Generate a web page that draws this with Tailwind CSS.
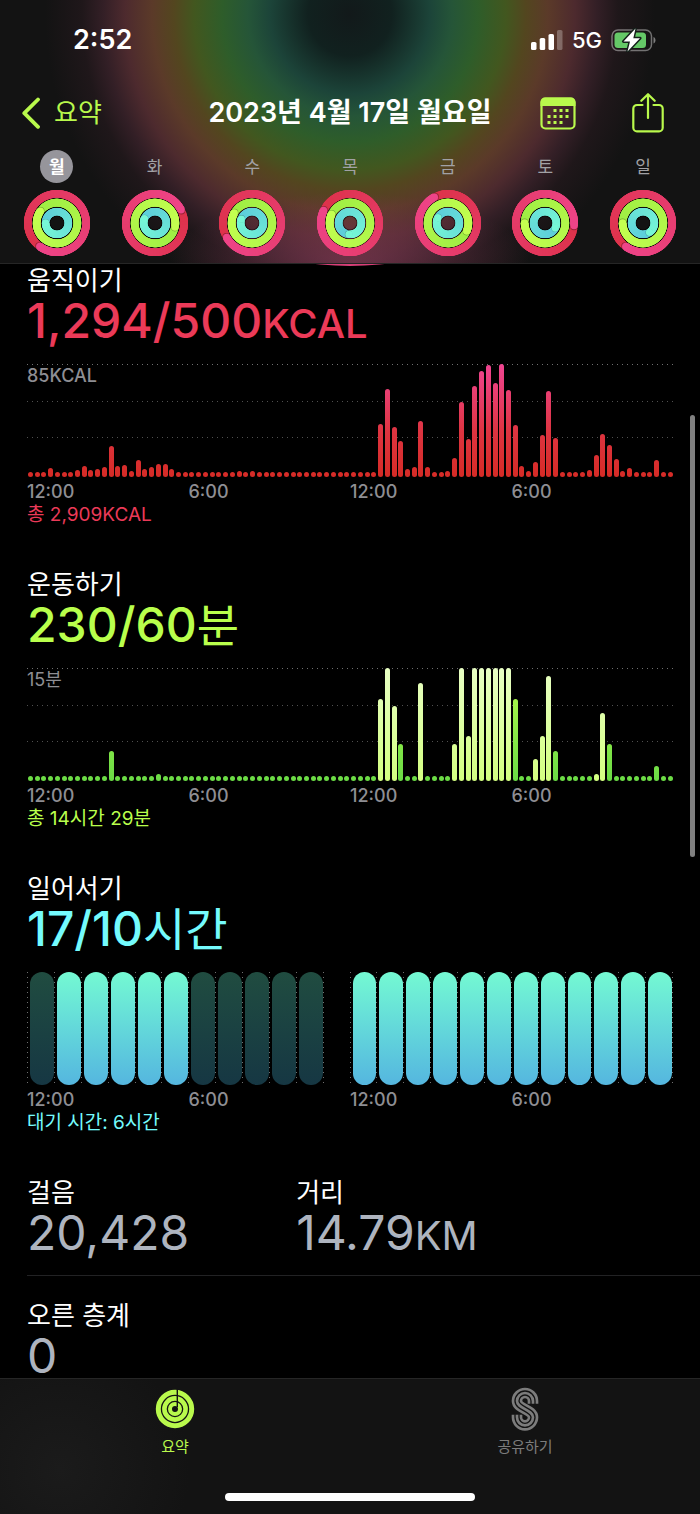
<!DOCTYPE html>
<html lang="ko">
<head>
  <meta charset="UTF-8" />
  <meta name="viewport" content="width=device-width, initial-scale=1.0" />
  <title>활동 요약</title>
  <script src="https://cdn.jsdelivr.net/npm/@tailwindcss/browser@4"></script>
</head>
<body class="bg-black text-white font-['Inter','Noto_Sans_CJK_KR',sans-serif]">
  <div class="flex h-screen flex-col">
    <!-- Header -->
    <header class="shrink-0 border-b border-[#262626] bg-[#131313] bg-[radial-gradient(ellipse_180px_70px_at_50%_100%,#8a3c58aa,transparent),radial-gradient(circle_at_50%_14px,#12191a_0px,#11211f_42px,#1c4439_80px,#255538_102px,#2e5d2a_128px,#42571f_156px,#53461f_176px,#5b3a29_198px,#4d2a2e_225px,#331f26_247px,#1f171a_268px,#131313_305px)]">
      <!-- Status bar -->
      <div class="flex h-20 items-center justify-between pl-[73px] pr-11">
        <span class="text-[27px] font-semibold leading-8">2:52</span>
        <div class="flex items-center gap-[9px]">
          <svg class="h-5 w-8" viewBox="0 0 32 20" fill="#fff">
            <rect x="0" y="12" width="5.500" height="8" rx="1.600" />
            <rect x="8.700" y="8" width="5.500" height="12" rx="1.600" />
            <rect x="17.500" y="4" width="5.500" height="16" rx="1.600" />
            <rect x="26" y="0" width="5.500" height="20" rx="1.600" fill-opacity=".28" />
          </svg>
          <span class="text-[22px] font-medium leading-6">5G</span>
          <svg class="h-6 w-[45px]" viewBox="0 0 45 24">
            <rect x="1" y="2" width="39.500" height="20.500" rx="6" fill="none" stroke="#fff" stroke-opacity=".4" stroke-width="1.500" />
            <path d="M42.500 9v6.500c2.600-1 2.600-5.500 0-6.500z" fill="#fff" fill-opacity=".45" />
            <rect x="3.500" y="4.500" width="31.500" height="15.500" rx="3.500" fill="#65c867" />
            <path d="M24.500 .5 12.500 13.500h6.500L16.500 23.500 29 10.200h-6.700z" fill="#fff" stroke="#14201a" stroke-width="3" paint-order="stroke" stroke-linejoin="round" />
          </svg>
        </div>
      </div>

      <!-- Navigation -->
      <nav class="grid h-[66px] grid-cols-[1fr_auto_1fr] items-center px-[22px]">
        <a href="#" class="flex items-center gap-[14px] text-[#b9f94c]">
          <svg class="h-8 w-[18px]" viewBox="0 0 18 32" fill="none" stroke="currentColor" stroke-width="3.800" stroke-linecap="round" stroke-linejoin="round">
            <path d="M16 2.500 2.300 16.200 16 29.800" />
          </svg>
          <span class="text-[26px] leading-8">요약</span>
        </a>
        <h1 class="text-[27px] font-semibold leading-8">2023년 4월 17일 월요일</h1>
        <div class="flex items-center justify-end gap-14 pr-[14px] text-[#b9f94c]">
          <button aria-label="달력">
            <svg class="h-9 w-9" viewBox="0 0 36 36">
              <rect x="1.500" y="3.500" width="33" height="30" rx="4" fill="none" stroke="currentColor" stroke-width="2.200" />
              <path d="M.5 11V7a4.500 4.500 0 0 1 4.500-4.500h26A4.500 4.500 0 0 1 35.500 7v4z" fill="currentColor" />
              <g fill="currentColor">
                <rect x="13.500" y="14" width="3" height="3" /><rect x="19.500" y="14" width="3" height="3" /><rect x="25.500" y="14" width="3" height="3" />
                <rect x="7.500" y="20" width="3" height="3" /><rect x="13.500" y="20" width="3" height="3" /><rect x="19.500" y="20" width="3" height="3" /><rect x="25.500" y="20" width="3" height="3" />
                <rect x="7.500" y="26" width="3" height="3" /><rect x="13.500" y="26" width="3" height="3" /><rect x="19.500" y="26" width="3" height="3" />
              </g>
            </svg>
          </button>
          <button aria-label="공유">
            <svg class="h-10 w-8" viewBox="0 0 32 40" fill="none" stroke="currentColor" stroke-width="2.200" stroke-linecap="round" stroke-linejoin="round">
              <path d="M10.500 12H5a3.700 3.700 0 0 0-3.700 3.700v19A3.700 3.700 0 0 0 5 38.400h22a3.700 3.700 0 0 0 3.700-3.700v-19A3.700 3.700 0 0 0 27 12h-5.500" />
              <path d="M16 25V1.500M9.300 7.800 16 1.200l6.700 6.600" />
            </svg>
          </button>
        </div>
      </nav>

      <!-- Week rings -->
      <div id="week" class="grid grid-cols-7 px-2 pb-[7px] pt-1"></div>
    </header>

    <!-- Main Content -->
    <div class="relative min-h-0 flex-1">
      <main class="relative h-full overflow-y-auto pt-px [scrollbar-width:none]">
        <!-- Lower edge of the large ring -->
        <div class="absolute -top-[598px] left-1/2 size-[600px] -translate-x-1/2 rounded-full bg-[#d83f78]"></div>

        <section class="relative px-[27px] pb-[42px]">
          <h2 class="text-[26px] leading-8">움직이기</h2>
          <p class="h-12 text-5xl font-medium leading-12 text-[#eb3a58]">1,294/500<span class="text-[40px] leading-10">KCAL</span></p>
          <div class="relative mt-[19px] h-[113px]">
            <div class="grid h-[110px] grid-rows-3">
              <div class="bg-[repeating-linear-gradient(90deg,#707070_0_1px,transparent_1px_5px)] bg-[length:100%_1px] bg-no-repeat text-[18px] font-medium leading-6 text-[#8e8e93]">85KCAL</div>
              <div class="bg-[repeating-linear-gradient(90deg,#505050_0_1px,transparent_1px_5px)] bg-[length:100%_1px] bg-no-repeat"></div>
              <div class="bg-[repeating-linear-gradient(90deg,#505050_0_1px,transparent_1px_5px)] bg-[length:100%_1px] bg-no-repeat"></div>
            </div>
            <div id="move" class="absolute inset-0 flex items-end"></div>
          </div>
          <div class="mt-1 grid grid-cols-4 text-[18px] font-medium leading-[22px] text-[#8e8e93]">
            <span>12:00</span><span>6:00</span><span>12:00</span><span>6:00</span>
          </div>
          <p class="text-[19px] leading-6 text-[#eb3a58]">총 2,909KCAL</p>
        </section>

        <section class="relative px-[27px] pb-[42px]">
          <h2 class="text-[26px] leading-8">운동하기</h2>
          <p class="h-12 text-5xl font-medium leading-12 text-[#b9ff4c]">230/60<span class="text-[46px] font-normal leading-10">분</span></p>
          <div class="relative mt-[19px] h-[113px]">
            <div class="grid h-[110px] grid-rows-3">
              <div class="bg-[repeating-linear-gradient(90deg,#707070_0_1px,transparent_1px_5px)] bg-[length:100%_1px] bg-no-repeat text-[18px] leading-6 text-[#8e8e93]">15분</div>
              <div class="bg-[repeating-linear-gradient(90deg,#505050_0_1px,transparent_1px_5px)] bg-[length:100%_1px] bg-no-repeat"></div>
              <div class="bg-[repeating-linear-gradient(90deg,#505050_0_1px,transparent_1px_5px)] bg-[length:100%_1px] bg-no-repeat"></div>
            </div>
            <div id="exercise" class="absolute inset-0 flex items-end"></div>
          </div>
          <div class="mt-1 grid grid-cols-4 text-[18px] font-medium leading-[22px] text-[#8e8e93]">
            <span>12:00</span><span>6:00</span><span>12:00</span><span>6:00</span>
          </div>
          <p class="text-[19px] leading-6 text-[#b9ff4c]">총 14시간 29분</p>
        </section>

        <section class="relative px-[27px] pb-[42px]">
          <h2 class="text-[26px] leading-8">일어서기</h2>
          <p class="h-12 text-5xl font-medium leading-12 text-[#74fbfd]">17/10<span class="text-[46px] font-normal leading-10">시간</span></p>
          <div id="stand" class="mt-[19px] flex h-[113px]"></div>
          <div class="mt-1 grid grid-cols-4 text-[18px] font-medium leading-[22px] text-[#8e8e93]">
            <span>12:00</span><span>6:00</span><span>12:00</span><span>6:00</span>
          </div>
          <p class="text-[19px] leading-6 text-[#74fbfd]">대기 시간: 6시간</p>
        </section>

        <div class="ml-[27px] grid grid-cols-[2fr_3fr] border-b border-[#222224] pb-[18px]">
          <section>
            <h2 class="text-[26px] leading-8">걸음</h2>
            <p class="h-12 text-5xl leading-12 text-[#aeb4bf]">20,428</p>
          </section>
          <section>
            <h2 class="text-[26px] leading-8">거리</h2>
            <p class="h-12 text-5xl leading-12 text-[#aeb4bf]">14.79<span class="text-[40px] leading-10">KM</span></p>
          </section>
        </div>
        <section class="px-[27px] pt-6">
          <h2 class="text-[26px] leading-8">오른 층계</h2>
          <p class="text-5xl leading-12 text-[#aeb4bf]">0</p>
        </section>
      </main>
      <!-- Scroll indicator -->
      <div class="absolute right-[5px] top-[151px] h-[442px] w-[5px] rounded-full bg-[#808080]"></div>
    </div>

    <!-- Tab bar -->
    <footer class="shrink-0 border-t border-[#262626] bg-[#131313] bg-[radial-gradient(circle_at_60px_90px,#1b1b1b,#131313_130px)]">
      <nav class="grid grid-cols-2 pt-2 text-[15px] leading-6">
        <a href="#" class="flex flex-col items-center gap-1 text-[#b9f94c]">
          <svg class="h-11 w-10" viewBox="0 0 40 44" fill="none" stroke="currentColor">
            <circle cx="20" cy="22" r="16.700" stroke-width="5" />
            <circle cx="20" cy="22" r="10.600" stroke-width="4.600" />
            <circle cx="20" cy="22" r="5" stroke-width="4" />
            <path d="M22.300 2v18" stroke="#131313" stroke-width="1.400" />
          </svg>
          <span>요약</span>
        </a>
        <a href="#" class="flex flex-col items-center gap-1 text-[#7c7c7c]">
          <svg class="h-11 w-7" viewBox="0 0 84 132" fill="none">
            <path d="M66 50V42A24 24 0 1 0 18 42C18 65 66 68 66 91A24 24 0 0 1 18 91V83" stroke="currentColor" stroke-width="32" />
            <path d="M66 51V42A24 24 0 1 0 18 42C18 65 66 68 66 91A24 24 0 0 1 18 91V82" stroke="#131313" stroke-width="16" />
            <path d="M66 50V42A24 24 0 1 0 18 42C18 65 66 68 66 91A24 24 0 0 1 18 91V83" stroke="currentColor" stroke-width="8" />
          </svg>
          <span>공유하기</span>
        </a>
      </nav>
      <div class="mx-auto mb-[13px] mt-[34px] h-2 w-[250px] rounded-full bg-white"></div>
    </footer>
  </div>

  <script>
    // Head angle of each ring, in degrees clockwise from the top: move, exercise, stand
    const week = [
      { day: '월', heads: [216, 305, 270], selected: true },
      { day: '화', heads: [63, 101, 292] },
      { day: '수', heads: [240, 299, 290] },
      { day: '목', heads: [295, 295, 185] },
      { day: '금', heads: [332, 113, 297] },
      { day: '토', heads: [95, 270, 116] },
      { day: '일', heads: [216, 270, 145] }
    ];

    const ringTypes = [
      { r: 29.2, width: 7.6, tail: [221, 50, 74], head: [238, 68, 136] },
      { r: 20.4, width: 7.6, tail: [158, 238, 68], head: [196, 255, 80] },
      { r: 11.4, width: 7.4, tail: [92, 204, 218], head: [118, 247, 214] }
    ];

    function point(r, deg) {
      const a = (deg - 90) * Math.PI / 180;
      return (33 + r * Math.cos(a)).toFixed(2) + ' ' + (33 + r * Math.sin(a)).toFixed(2);
    }

    // One full turn that brightens up to the rounded head
    function ring(type, head) {
      const steps = 60;
      let out = `<circle cx="33" cy="33" r="${type.r - 0.7}" fill="none" stroke="#000" stroke-opacity=".5" stroke-width="${type.width + 1}" />`;
      for (let i = 0; i < steps; i++) {
        const color = type.tail.map((c, k) => Math.round(c + (type.head[k] - c) * i / (steps - 1)));
        const start = head + i * 6;
        const end = Math.min(start + 24, head + 360);
        out += `<path d="M${point(type.r, start)}A${type.r} ${type.r} 0 0 1 ${point(type.r, end)}" fill="none" stroke="rgb(${color})" stroke-width="${type.width}" />`;
      }
      const [x, y] = point(type.r, head).split(' ');
      const [sx, sy] = point(type.r, head + 2).split(' ');
      out += `<circle cx="${sx}" cy="${sy}" r="${type.width / 2}" fill="#000" fill-opacity=".3" />`;
      out += `<circle cx="${x}" cy="${y}" r="${type.width / 2}" fill="rgb(${type.head})" />`;
      return out;
    }

    document.getElementById('week').innerHTML = week.map(item => `
      <button class="flex flex-col items-center gap-[7px]">
        <span class="${item.selected
          ? 'flex size-[33px] items-center justify-center rounded-full bg-[#96959b] pt-0.5 text-[17px] font-bold text-white'
          : 'flex size-[33px] items-center justify-center pt-0.5 text-[17px] text-[#a1a1a5]'}">${item.day}</span>
        <svg class="size-[66px]" viewBox="0 0 66 66">${ringTypes.map((type, i) => ring(type, item.heads[i])).join('')}</svg>
      </button>`).join('');

    // Bars that differ from the 5px idle dot, one slot per 15 minutes
    const move = {
      3: 9, 7: 7, 8: 11, 9: 7, 10: 8, 11: 10, 12: 31, 13: 11, 14: 12, 15: 6, 16: 17, 17: 8, 18: 10, 19: 13, 20: 13, 21: 8,
      31: 6, 33: 6, 52: 53, 53: 88, 54: 50, 55: 36, 56: 8, 57: 10, 58: 56, 59: 10, 62: 6, 63: 19, 64: 75, 65: 38,
      66: 91, 67: 106, 68: 112, 69: 94, 70: 113, 71: 87, 72: 52, 73: 11, 74: 6, 75: 15, 76: 42, 77: 86, 78: 39,
      83: 7, 84: 22, 85: 43, 86: 32, 87: 18, 88: 6, 89: 9, 93: 17
    };
    const exercise = {
      12: 30, 19: 7, 52: 82, 53: 113, 54: 75, 55: 37, 58: 98, 63: 37, 64: 113, 65: 45, 66: 113, 67: 113, 68: 113,
      69: 113, 70: 113, 71: 113, 72: 82, 75: 22, 76: 45, 77: 105, 78: 30, 84: 7, 85: 68, 86: 37, 93: 15
    };
    // Slots recorded during a workout
    const workout = [52, 53, 54, 58, 63, 64, 65, 66, 67, 68, 69, 70, 71, 75, 76, 77, 84, 85];

    function renderBars(id, data, barClass) {
      let out = '';
      for (let i = 0; i < 96; i++) {
        out += `<div class="flex flex-1 justify-center"><div class="${barClass(i)}" style="height: ${data[i] || 5}px"></div></div>`;
      }
      document.getElementById(id).innerHTML = out;
    }

    renderBars('move', move, () => 'w-[5px] shrink-0 rounded-full bg-[linear-gradient(to_top,#d62b26,#dd3440_40%,#f04592)] bg-[length:100%_113px] bg-bottom');
    renderBars('exercise', exercise, i => workout.includes(i)
      ? 'w-[5px] shrink-0 rounded-full bg-[linear-gradient(to_top,#d3ff80,#e8ffc4)] bg-[length:100%_113px] bg-bottom'
      : 'w-[5px] shrink-0 rounded-full bg-[linear-gradient(to_top,#6adb45,#b8ff4b)] bg-[length:100%_113px] bg-bottom');

    // 1 = stood, 0 = idle, - = no data
    const stand = '01111100000-111111111111';
    document.getElementById('stand').innerHTML = stand.split('').map((state, i) => {
      let bar = '';
      if (state === '1') bar = '<div class="flex-1 rounded-full bg-linear-to-b from-[#74f9d2] to-[#55b6df]"></div>';
      if (state === '0') bar = '<div class="flex-1 rounded-full bg-linear-to-b from-[#204c40] to-[#163743]"></div>';
      return `<div class="flex flex-1 bg-[repeating-linear-gradient(#707070_0_1px,transparent_1px_5px)] bg-[length:1px_100%] bg-no-repeat pl-[3px]">${bar}</div>`;
    }).join('') + '<div class="w-px bg-[repeating-linear-gradient(#707070_0_1px,transparent_1px_5px)]"></div>';
  </script>
</body>
</html>
